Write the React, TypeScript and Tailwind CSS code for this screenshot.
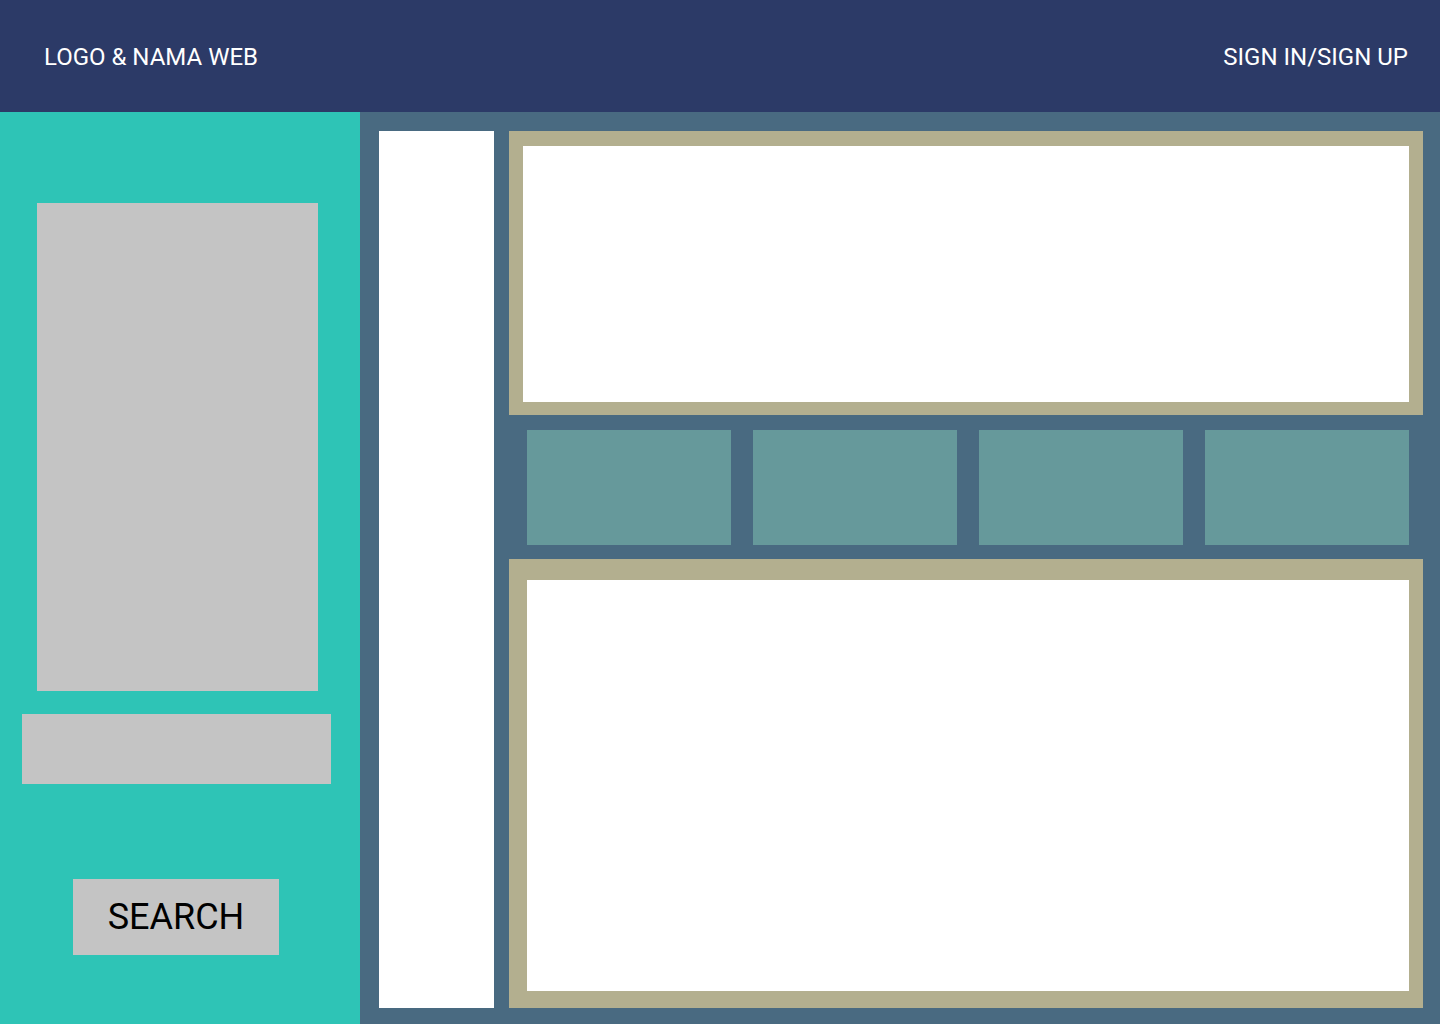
export default function App() {
  const font = { fontFamily: 'Roboto, "Liberation Sans", sans-serif' };
  return (
    <div className="w-[1440px] h-[1024px] flex flex-col overflow-hidden" style={font}>
      <header className="h-[112px] shrink-0 bg-[#2c3a67] flex items-center justify-between pl-[44px] pr-[32px] pt-[2px] text-white text-[24px]">
        <span>LOGO &amp; NAMA WEB</span>
        <span>SIGN IN/SIGN UP</span>
      </header>
      <div className="flex flex-1 min-h-0">
        <aside className="w-[360px] shrink-0 bg-[#2ec4b6] flex flex-col">
          <div className="mt-[91px] ml-[37px] w-[281px] h-[488px] bg-[#c4c4c4]" />
          <div className="mt-[23px] ml-[22px] w-[309px] h-[70px] bg-[#c4c4c4]" />
          <button className="mt-[95px] ml-[73px] w-[206px] h-[76px] bg-[#c4c4c4] text-black text-[36px] flex items-center justify-center">
            SEARCH
          </button>
        </aside>
        <main className="flex-1 bg-[#496a81] flex gap-[15px] pt-[19px] pl-[19px] pr-[17px] pb-[16px]">
          <div className="w-[115px] bg-white" />
          <div className="w-[914px] flex flex-col">
            <div className="h-[284px] shrink-0 bg-white border-[#b3af8f] border-t-[15px] border-l-[14px] border-r-[14px] border-b-[13px]" />
            <div className="mt-[15px] mb-[14px] h-[115px] shrink-0 pl-[18px] pr-[14px] flex gap-[22px]">
              <div className="w-[204px] bg-[#66999b]" />
              <div className="w-[204px] bg-[#66999b]" />
              <div className="w-[204px] bg-[#66999b]" />
              <div className="w-[204px] bg-[#66999b]" />
            </div>
            <div className="flex-1 bg-white border-[#b3af8f] border-t-[21px] border-l-[18px] border-r-[14px] border-b-[17px]" />
          </div>
        </main>
      </div>
    </div>
  );
}
